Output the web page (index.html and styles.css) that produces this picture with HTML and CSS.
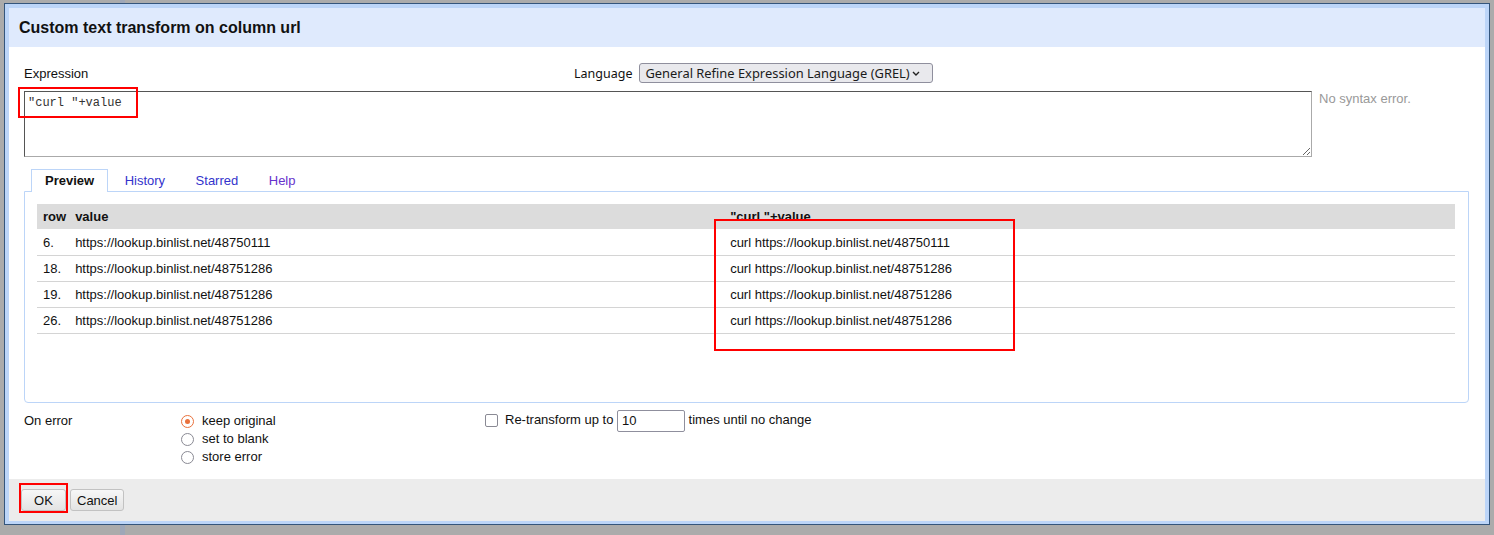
FILE: index.html
```html
<!DOCTYPE html>
<html>
<head>
<meta charset="utf-8">
<title>Custom text transform</title>
<link rel="stylesheet" href="styles.css">
</head>
<body>
<div class="page">
  <div class="dialog">
    <div class="dialog-inner">
      <div class="dlg-header">Custom text transform on column url</div>
      <div class="dlg-body">
        <div class="expr-head">
          <span class="expr-label">Expression</span>
          <span class="lang">
            <span class="lang-label">Language</span>
            <span class="select">
              <span class="select-text">General Refine Expression Language (GREL)</span>
              <svg class="chev" width="8" height="5" viewBox="0 0 8 5"><path d="M1 1 L4 4 L7 1" fill="none" stroke="#222" stroke-width="1.4"/></svg>
            </span>
          </span>
        </div>
        <div class="expr-row">
          <textarea class="expr-input" spellcheck="false">"curl "+value</textarea>
          <div class="status">No syntax error.</div>
        </div>
        <div class="tabs">
          <ul class="tab-list">
            <li class="tab active">Preview</li>
            <li class="tab">History</li>
            <li class="tab">Starred</li>
            <li class="tab visited">Help</li>
          </ul>
          <div class="tab-panel">
            <table class="preview">
              <thead>
                <tr><th class="c-row">row</th><th class="c-val">value</th><th>"curl "+value</th></tr>
              </thead>
              <tbody>
                <tr><td>6.</td><td>https://lookup.binlist.net/48750111</td><td>curl https://lookup.binlist.net/48750111</td></tr>
                <tr><td>18.</td><td>https://lookup.binlist.net/48751286</td><td>curl https://lookup.binlist.net/48751286</td></tr>
                <tr><td>19.</td><td>https://lookup.binlist.net/48751286</td><td>curl https://lookup.binlist.net/48751286</td></tr>
                <tr><td>26.</td><td>https://lookup.binlist.net/48751286</td><td>curl https://lookup.binlist.net/48751286</td></tr>
              </tbody>
            </table>
          </div>
        </div>
        <div class="options">
          <div class="opt-label">On error</div>
          <div class="radios">
            <label class="radio-row"><span class="radio checked"></span>keep original</label>
            <label class="radio-row"><span class="radio"></span>set to blank</label>
            <label class="radio-row"><span class="radio"></span>store error</label>
          </div>
          <div class="retransform">
            <span class="checkbox"></span><span>Re-transform up to <span class="num-input">10</span> times until no change</span>
          </div>
        </div>
      </div>
      <div class="dlg-footer">
        <button class="btn btn-ok">OK</button>
        <button class="btn">Cancel</button>
      </div>
    </div>
  </div>
  <div class="mark mark-expr"></div>
  <div class="mark mark-result"></div>
  <div class="mark mark-ok"></div>
</div>
</body>
</html>
```

FILE: styles.css
```css
* { box-sizing: border-box; }
html, body { margin: 0; padding: 0; }
body {
  font-family: "Liberation Sans", Arial, sans-serif;
  font-size: 13px;
  color: #111;
  background: #ababab;
}
.page {
  position: relative;
  width: 1494px;
  height: 535px;
  padding: 3px 0 0 4px;
  background: linear-gradient(to right, #ababab 0, #ababab 120px, #9ea7b8 120px, #9ea7b8 125px, #ababab 125px);
}
.dialog {
  width: 1486px;
  height: 522px;
  border: 1px solid #34557c;
  padding: 4px 4px 3px 4px;
  background: #bcd5f8;
}
.dialog-inner {
  height: 100%;
  display: flex;
  flex-direction: column;
  background: #fff;
}
.dlg-header {
  height: 39px;
  line-height: 39px;
  padding-left: 10px;
  background: #dfeafd;
  font-size: 16px;
  font-weight: bold;
  color: #111;
}
.dlg-body {
  flex: 1;
  padding: 15px 0 0 15px;
}
.expr-head {
  display: flex;
  align-items: center;
  height: 22px;
}
.expr-label { width: 550px; }
.lang { display: flex; align-items: center; gap: 7px; font-family: "Noto Sans", sans-serif; font-size: 12.5px; }
.select {
  display: flex;
  align-items: center;
  justify-content: space-between;
  width: 294px;
  height: 20px;
  padding: 0 12px 0 5px;
  border: 1px solid #8f8f9d;
  border-radius: 3px;
  background: #e9e9ed;
  color: #1b1b1b;
  font-size: 12.9px;
}
.expr-row {
  display: flex;
  align-items: flex-start;
  margin-top: 7px;
}
.expr-input {
  width: 1288px;
  height: 66px;
  margin: 0;
  padding: 4px 3px 2px;
  border: 1px solid;
  border-color: #555 #aaa #aaa #555;
  font-family: "Liberation Mono", monospace;
  font-size: 12px;
  line-height: 14px;
  color: #333;
  resize: both;
}
.status {
  padding-left: 7px;
  line-height: 15px;
  color: #999;
}
.tabs { margin-top: 12px; width: 1445px; }
.tab-list {
  list-style: none;
  margin: 0;
  padding: 0 0 0 7px;
  display: flex;
  height: 22px;
}
.tab {
  height: 23px;
  line-height: 21px;
  padding: 0 13px;
  margin-right: 2.5px;
  border: 1px solid transparent;
  border-bottom: 0;
  color: #3333cc;
  position: relative;
  z-index: 1;
}
.tab.visited { color: #6633cc; }
.tab.active {
  border-color: #bcd5f8;
  background: #fff;
  color: #111;
  font-weight: bold;
}
.tab-panel {
  height: 212px;
  border: 1px solid #bcd5f8;
  border-radius: 0 0 4px 4px;
  padding: 12px 13px 0 12px;
}
.preview {
  width: 100%;
  border-collapse: collapse;
}
.preview th {
  height: 25px;
  padding: 0 3px 0 6px;
  background: #dcdcdc;
  text-align: left;
  font-weight: bold;
  color: #111;
}
.preview td {
  height: 26px;
  padding: 1px 3px 0 6px;
  border-bottom: 1px solid #d4d4d4;
  color: #111;
}
.preview .c-row { width: 32px; }
.preview .c-val { width: 655px; }
.options {
  display: grid;
  grid-template-columns: 157px 304px auto;
  margin-top: 9px;
  line-height: 18px;
}
.radio-row { display: flex; align-items: center; height: 18px; }
.radio {
  width: 13px;
  height: 13px;
  border: 1.5px solid #8a8a94;
  border-radius: 50%;
  margin-right: 8px;
  display: inline-flex;
  align-items: center;
  justify-content: center;
}
.radio.checked { border-color: #e9713c; }
.radio.checked::after {
  content: "";
  width: 5px;
  height: 5px;
  border-radius: 50%;
  background: #e9713c;
}
.retransform { display: flex; align-items: center; height: 18px; }
.checkbox {
  width: 13px;
  height: 13px;
  border: 1.5px solid #8a8a94;
  border-radius: 2px;
  margin-right: 7px;
  position: relative;
  top: -1px;
}
.num-input {
  display: inline-block;
  width: 68px;
  height: 22px;
  line-height: 20px;
  padding: 0 4px;
  border: 1px solid #8f8f9d;
  border-radius: 2px;
  vertical-align: middle;
  color: #111;
}
.dlg-footer {
  height: 42px;
  background: #ececec;
  padding: 10px 0 0 12px;
  display: flex;
  align-items: flex-start;
  gap: 4px;
}
.btn {
  height: 22px;
  min-width: 45px;
  padding: 0 6px;
  border: 1px solid #c2c2c2;
  border-radius: 3px;
  background: linear-gradient(#f7f7f7, #e3e3e3);
  font-family: "Liberation Sans", Arial, sans-serif;
  font-size: 13px;
  color: #111;
}
.mark {
  position: absolute;
  border: 2px solid #ff0000;
}
.mark-expr { left: 18px; top: 87px; width: 120px; height: 31px; }
.mark-result { left: 714px; top: 219px; width: 301px; height: 132px; }
.mark-ok { left: 19px; top: 483px; width: 49px; height: 30px; }
```
